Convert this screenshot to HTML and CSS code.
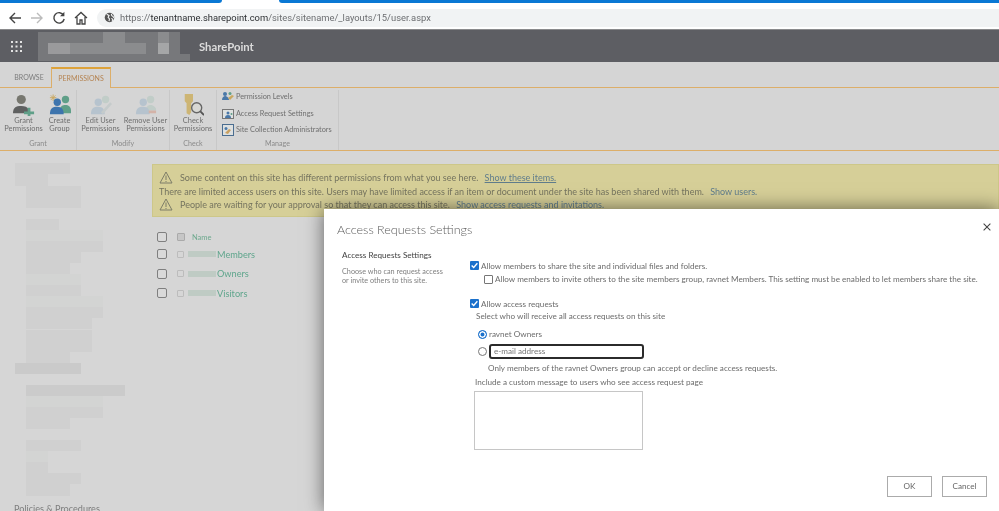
FILE: index.html
```html
<!DOCTYPE html>
<html lang="en">
<head>
<meta charset="utf-8">
<title>Access Requests Settings</title>
<link rel="stylesheet" href="styles.css">
</head>
<body>
<div class="page">
  <div class="tabstrip"><span class="tab-blue left"></span><span class="tab-gap"></span><span class="tab-blue right"></span></div>
  <header class="toolbar">
    <svg class="navicon" viewBox="0 0 16 16"><path d="M14 8H3M8 3 3 8l5 5" fill="none" stroke="#444" stroke-width="1.4"/></svg>
    <svg class="navicon" viewBox="0 0 16 16"><path d="M2 8h11M8 3l5 5-5 5" fill="none" stroke="#bbb" stroke-width="1.4"/></svg>
    <svg class="navicon" viewBox="0 0 16 16"><path d="M12.6 5.2A5.2 5.2 0 1 0 13.2 9" fill="none" stroke="#444" stroke-width="1.4"/><path d="M13.4 1.8v4.4H9z" fill="#444"/></svg>
    <svg class="navicon" viewBox="0 0 16 16"><path d="M2 8l6-5.5L14 8M4 7v7h3v-4h2v4h3V7" fill="none" stroke="#444" stroke-width="1.3"/></svg>
    <div class="urlbar">
      <svg class="globe" viewBox="0 0 12 12"><circle cx="6" cy="6" r="5.2" fill="#555"/><path d="M3 2.5l2.5 1.2L4.5 6 6 7.5 5.5 10M8 2l.5 2L10 5l1 1.5M8 7l1.5 1L9 10" fill="none" stroke="#f1f3f4" stroke-width="1.2"/></svg>
      <span class="url">https://<b>tenantname.sharepoint.com</b>/sites/sitename/_layouts/15/user.aspx</span>
    </div>
  </header>
  <div class="suitebar">
    <svg class="waffle" viewBox="0 0 11 11"><g fill="#e4e4e4"><rect width="2" height="2"/><rect x="4.5" width="2" height="2"/><rect x="9" width="2" height="2"/><rect y="4.5" width="2" height="2"/><rect x="4.5" y="4.5" width="2" height="2"/><rect x="9" y="4.5" width="2" height="2"/><rect y="9" width="2" height="2"/><rect x="4.5" y="9" width="2" height="2"/><rect x="9" y="9" width="2" height="2"/></g></svg>
    <svg class="tenant" viewBox="0 0 152 29"><g fill="#77787b"><rect width="142" height="11"/><rect y="11" width="142" height="11"/><rect y="22" width="152" height="7"/></g><g fill="#8b8c8e"><rect x="10" y="11" width="98" height="11"/><rect x="120" y="11" width="11" height="11"/><rect x="120" y="0" width="11" height="11"/><rect x="65" y="0" width="22" height="11"/></g><rect x="10" y="11" width="22" height="11" fill="#9a9a9c"/><rect x="120" y="11" width="11" height="11" fill="#a5a6a7"/></svg>
    <span class="suitename">SharePoint</span>
  </div>
  <nav class="ribbontabs">
    <span class="rtab">BROWSE</span>
    <span class="rtab active">PERMISSIONS</span>
  </nav>
  <section class="ribbon">
    <div class="group grant">
      <div class="cmds">
        <div class="cmd first">
          <svg class="bigicon" viewBox="0 0 24 24"><circle cx="9" cy="6" r="5" fill="#77776f"/><path d="M0 21c0-6 3-8 9-8 4 0 7 1 8 4v4z" fill="#5f6060"/><path d="M16 15h3v4h4v3h-4v2h-3v-2h-4v-3h4z" fill="#5f9f88"/></svg>
          <span>Grant<br>Permissions</span>
        </div>
        <div class="cmd narrow">
          <svg class="bigicon" viewBox="0 0 24 24"><g stroke="#c9a860" stroke-width="1"><path d="M1 4h7M4.500 .5v7M2 1.500l5 5M7 1.500l-5 5"/></g><circle cx="18" cy="6" r="4" fill="#5f9f88"/><path d="M12 18c0-5 3-6 6-6s6 2 6 6v3H12z" fill="#5f9f88"/><circle cx="9" cy="9" r="4" fill="#3d74ad"/><path d="M1 22c0-6 3-8 8-8s7 3 7 8z" fill="#3d74ad"/></svg>
          <span>Create<br>Group</span>
        </div>
      </div>
      <span class="grouplabel">Grant</span>
    </div>
    <div class="group modify">
      <div class="cmds">
        <div class="cmd wide">
          <svg class="bigicon" viewBox="0 0 24 24"><circle cx="17" cy="6" r="4" fill="#c1cdc8"/><circle cx="9" cy="9" r="4" fill="#b6c3ce"/><path d="M1 22c0-6 3-8 8-8s7 3 7 8z" fill="#b6c3ce"/><path d="M12 20 22 9l2 2-10 11z" fill="#c5cbcb"/></svg>
          <span>Edit User<br>Permissions</span>
        </div>
        <div class="cmd wide">
          <svg class="bigicon" viewBox="0 0 24 24"><circle cx="17" cy="6" r="4" fill="#c1cdc8"/><path d="M12 18c0-5 3-6 5-6s6 2 6 5v1z" fill="#c1cdc8"/><circle cx="9" cy="9" r="4" fill="#b6c3ce"/><path d="M1 22c0-6 3-8 8-8s7 3 7 8z" fill="#b6c3ce"/><rect x="15" y="18" width="8" height="3" fill="#d4b3a8"/></svg>
          <span>Remove User<br>Permissions</span>
        </div>
      </div>
      <span class="grouplabel">Modify</span>
    </div>
    <div class="group check">
      <div class="cmds">
        <div class="cmd wide">
          <svg class="bigicon" viewBox="0 0 24 24"><path d="M3 0h9v8l-2 2v10l-2 3-3-2V10L3 8z" fill="#cdb574"/><circle cx="16" cy="15" r="5.500" fill="#d8d8d4" stroke="#666" stroke-width="1.500"/><path d="M20 19l4 4" stroke="#555" stroke-width="2"/></svg>
          <span>Check<br>Permissions</span>
        </div>
      </div>
      <span class="grouplabel">Check</span>
    </div>
    <div class="group manage">
      <ul class="cmdlist">
        <li><svg class="smallicon" viewBox="0 0 12 12"><circle cx="3" cy="3" r="2" fill="#4a78a8"/><path d="M0 9c0-3 2-4 3-4s4 1 4 4z" fill="#4a78a8"/><circle cx="8" cy="2.500" r="1.500" fill="#5f9f88"/><path d="M6 7l4-3 2 1-4 4z" fill="#c9a860"/></svg>Permission Levels</li>
        <li><svg class="smallicon" viewBox="0 0 12 12"><rect x=".5" y="1.500" width="11" height="9" fill="#dfe2e0" stroke="#777"/><circle cx="6" cy="5" r="1.500" fill="#4a78a8"/><path d="M3 10c0-2 1-3 3-3s3 1 3 3z" fill="#4a78a8"/><circle cx="9.500" cy="6" r="1" fill="#5f9f88"/></svg>Access Request Settings</li>
        <li><svg class="smallicon" viewBox="0 0 12 12"><rect x=".5" y=".5" width="11" height="11" fill="#dde0e0" stroke="#4a6d90"/><circle cx="4" cy="4.500" r="1.500" fill="#4a78a8"/><path d="M3 9l4-4 2 1-3 4z" fill="#c9a060"/></svg>Site Collection Administrators</li>
      </ul>
      <span class="grouplabel">Manage</span>
    </div>
  </section>
  <main class="workspace">
    <aside class="sidenav">
      <svg class="mosaic" viewBox="0 0 125 345" aria-hidden="true">
        <g fill="#d0d0d0">
          <rect x="15" y="12" width="55" height="11"/><rect x="15" y="23" width="33" height="12"/><rect x="26" y="35" width="55" height="22"/>
          <rect x="26" y="68" width="33" height="11"/><rect x="26" y="90" width="77" height="11"/><rect x="26" y="101" width="55" height="11"/><rect x="26" y="112" width="44" height="11"/>
          <rect x="26" y="134" width="55" height="11"/><rect x="26" y="156" width="77" height="11"/><rect x="26" y="167" width="66" height="11"/><rect x="26" y="179" width="66" height="22"/><rect x="26" y="201" width="44" height="11"/>
          <rect x="15" y="212" width="66" height="11" fill="#cacaca"/>
          <rect x="26" y="234" width="99" height="11" fill="#cbcbcb"/><rect x="26" y="256" width="77" height="11"/><rect x="26" y="267" width="44" height="11"/>
          <rect x="26" y="289" width="55" height="11"/><rect x="26" y="311" width="22" height="11"/><rect x="26" y="322" width="55" height="11"/><rect x="26" y="333" width="44" height="12"/>
        </g>
        <g fill="#d3d4d3">
          <rect x="26" y="79" width="77" height="11"/><rect x="26" y="123" width="55" height="11"/><rect x="26" y="145" width="77" height="11"/><rect x="26" y="245" width="77" height="11"/><rect x="26" y="300" width="22" height="11"/>
        </g>
      </svg>
      <span class="navlink">Policies &amp; Procedures</span>
    </aside>
    <div class="content">
      <div class="notice">
        <p><svg class="warn" viewBox="0 0 14 13"><path d="M7 1 1 12h12z" fill="none" stroke="#7d7d68" stroke-width="1"/><path d="M7 4.500V9M7 10v1" stroke="#7d7d68"/></svg>Some content on this site has different permissions from what you see here. <a class="ul">Show these items.</a></p>
        <p>There are limited access users on this site. Users may have limited access if an item or document under the site has been shared with them. <a>Show users.</a></p>
        <p><svg class="warn" viewBox="0 0 14 13"><path d="M7 1 1 12h12z" fill="none" stroke="#7d7d68" stroke-width="1"/><path d="M7 4.500V9M7 10v1" stroke="#7d7d68"/></svg>People are waiting for your approval so that they can access this site. <a>Show access requests and invitations.</a></p>
      </div>
      <div class="grouplist">
        <div class="lrow head"><span class="cb"></span><span class="mini filled"></span><span class="hname">Name</span></div>
        <div class="lrow"><span class="cb"></span><span class="mini"></span><span class="blur"></span><span class="gname">Members</span></div>
        <div class="lrow"><span class="cb"></span><span class="mini"></span><span class="blur"></span><span class="gname">Owners</span></div>
        <div class="lrow"><span class="cb"></span><span class="mini"></span><span class="blur"></span><span class="gname">Visitors</span></div>
      </div>
    </div>
  </main>
  <div class="modal">
    <div class="modalhead">
      <h1>Access Requests Settings</h1>
      <svg class="close" viewBox="0 0 9 9"><path d="M.7.7l7.600 7.600M8.300.7.7 8.300" stroke="#444" stroke-width="1.200"/></svg>
    </div>
    <div class="modalbody">
      <div class="desc">
        <h2>Access Requests Settings</h2>
        <p>Choose who can request access<br>or invite others to this site.</p>
      </div>
      <form class="opts">
        <label class="opt"><span class="tick"><svg viewBox="0 0 11 11"><path d="M2 5.500 4.500 8 9 2.800" fill="none" stroke="#fff" stroke-width="1.600"/></svg></span>Allow members to share the site and individual files and folders.</label>
        <label class="opt sub"><span class="untick"></span>Allow members to invite others to the site members group, ravnet Members. This setting must be enabled to let members share the site.</label>
        <label class="opt second"><span class="tick"><svg viewBox="0 0 11 11"><path d="M2 5.500 4.500 8 9 2.800" fill="none" stroke="#fff" stroke-width="1.600"/></svg></span>Allow access requests</label>
        <p class="line select">Select who will receive all access requests on this site</p>
        <label class="opt radio1"><span class="radio on"></span>ravnet Owners</label>
        <div class="opt radio2"><span class="radio"></span><span class="email">e-mail address</span></div>
        <p class="line only">Only members of the ravnet Owners group can accept or decline access requests.</p>
        <p class="line include">Include a custom message to users who see access request page</p>
        <div class="message"></div>
      </form>
    </div>
    <div class="actions"><span class="btn">OK</span><span class="btn">Cancel</span></div>
  </div>
</div>
</body>
</html>
```

FILE: styles.css
```css
* { box-sizing: border-box; }
html, body { margin: 0; height: 100%; overflow: hidden; background: #fff; }
body { font-family: Lato, "Open Sans", "Liberation Sans", sans-serif; }
p, h1, h2, ul { margin: 0; padding: 0; }
ul { list-style: none; }
.page { position: relative; width: 999px; height: 511px; overflow: hidden; display: flex; flex-direction: column; filter: blur(0.35px); }

.tabstrip { display: flex; height: 3px; flex: none; }
.tab-blue { background: #0a78d4; height: 3px; }
.tab-blue.left { width: 222px; border-bottom-right-radius: 3px; }
.tab-gap { width: 57px; }
.tab-blue.right { flex: 1; border-bottom-left-radius: 3px; }

.toolbar { height: 26px; flex: none; display: flex; align-items: center; padding: 3px 0 0 7px; gap: 6px; background: #fff; }
.navicon { width: 16px; height: 16px; flex: none; }
.urlbar { flex: 1; margin-left: 2px; height: 18px; background: #f1f3f4; border-radius: 9px 0 0 9px; display: flex; align-items: center; padding-left: 7px; gap: 5px; }
.globe { width: 11px; height: 11px; flex: none; }
.url { font: 9.4px/18px Roboto, sans-serif; color: #6c6e71; white-space: nowrap; }
.url b { font-weight: 400; color: #2c2f32; }

.suitebar { height: 33px; flex: none; background: #5d5e63; border-top: 1px solid #8a8a8c; display: flex; align-items: center; padding-left: 11px; }
.waffle { width: 11px; height: 11px; flex: none; }
.tenant { width: 152px; height: 29px; flex: none; margin-left: 16px; }
.suitename { margin-left: 9px; font-size: 11.300px; font-weight: 700; color: #dcdcdc; }

.ribbontabs { height: 26px; flex: none; background: #d5d5d5; border-bottom: 1px solid #dcae69; display: flex; align-items: flex-end; padding-left: 7px; }
.rtab { font-size: 7px; line-height: 19px; color: #7c7c7c; width: 44px; text-align: center; }
.rtab.active { width: 60px; height: 21px; margin-bottom: -1px; background: #d5d5d5; border: 1px solid #dcae69; border-top: 2px solid #dda23a; border-bottom: 0; color: #b58452; text-align: center; }

.ribbon { height: 63px; flex: none; background: #d5d5d5; border-bottom: 1px solid #dcae69; display: flex; padding-top: 2px; }
.group { display: flex; flex-direction: column; align-items: center; border-right: 1px solid #c8c8c8; height: 60px; }
.group.grant { width: 77px; align-items: stretch; }
.group.modify { width: 93px; }
.group.check { width: 47px; }
.group.manage { width: 122px; align-items: stretch; }
.cmds { display: flex; flex: 1; justify-content: center; }
.grant .cmds { justify-content: flex-start; padding-left: 4px; }
.cmd { display: flex; flex-direction: column; align-items: center; font-size: 7.450px; line-height: 8px; color: #6f6f6f; width: 38px; text-align: center; white-space: nowrap; }
.cmd.first { width: 39px; }
.cmd.narrow { width: 33px; }
.cmd.wide { width: 45px; }
.bigicon { width: 22px; height: 22px; margin-top: 4px; margin-bottom: 1px; }
.grouplabel { font-size: 7.100px; line-height: 12px; color: #8a8a8a; text-align: center; }
.cmdlist { flex: 1; display: flex; flex-direction: column; padding: 1px 0 0 5px; gap: 4.500px; font-size: 7.350px; line-height: 12px; color: #6f6f6f; white-space: nowrap; }
.cmdlist li { display: flex; align-items: center; gap: 2px; }
.smallicon { width: 12px; height: 12px; flex: none; }

.workspace { flex: 1; min-height: 0; background: #d6d6d6; display: flex; }
.sidenav { width: 152px; flex: none; display: flex; flex-direction: column; }
.mosaic { width: 125px; height: 345px; flex: none; }
.navlink { margin: 7px 0 0 14px; font-size: 9.100px; line-height: 12px; color: #7d7d7d; white-space: nowrap; }
.content { flex: 1; min-width: 0; padding-top: 13px; }
.notice { height: 53px; background: #d6cf98; border: 1px solid #cdc789; padding: 6px 0 0 6px; font-size: 9px; line-height: 13.500px; color: #75745f; white-space: nowrap; }
.notice p { display: flex; align-items: center; white-space: pre; }
.notice a { color: #607d8c; margin-left: 4px; }
.notice a.ul { text-decoration: underline; }
.warn { width: 14px; height: 13px; flex: none; margin-right: 7px; }
.grouplist { padding: 12.500px 0 0 5px; }
.lrow { display: flex; align-items: center; height: 19.500px; }
.lrow.head { height: 15px; }
.cb { width: 10px; height: 10px; flex: none; border: 1px solid #7f7f7f; border-radius: 2px; margin-right: 10px; background: #d9d9d9; }
.mini { width: 7px; height: 7px; flex: none; border: 1px solid #bcbcbc; border-radius: 1px; margin-right: 4px; }
.mini.filled { width: 8px; height: 8px; background: #c6c6c6; border-color: #aaa; margin-right: 7px; }
.hname { font-size: 7.500px; color: #6ea98e; }
.blur { width: 28px; height: 6px; flex: none; background: #bfcbc4; }
.gname { margin-left: 1px; font-size: 9.200px; color: #60a68d; }

.modal { position: absolute; left: 324px; right: 0; top: 209px; bottom: 0; background: #fff; box-shadow: 0 0 18px rgba(0,0,0,.55); display: flex; flex-direction: column; }
.modalhead { display: flex; justify-content: space-between; align-items: center; padding: 10px 8px 0 13px; height: 30px; }
h1 { font-size: 12.500px; font-weight: 300; color: #5a5a5a; }
.close { width: 8px; height: 8px; margin-top: -5px; }
.modalbody { display: flex; padding: 9px 0 0 18px; }
.desc { width: 128px; flex: none; }
h2 { font-size: 8.150px; font-weight: 400; line-height: 15px; color: #3f3f3f; }
.desc p { margin-top: 3.500px; font-size: 7.250px; line-height: 9.500px; color: #808080; }
.opts { flex: 1; min-width: 0; font-size: 8.150px; color: #6c6c6c; }
.opt { display: flex; align-items: center; white-space: nowrap; }
.tick { width: 9px; height: 9px; flex: none; background: #1b71cc; border-radius: 1px; margin-right: 2px; display: flex; }
.tick svg { width: 9px; height: 9px; }
.untick { width: 9px; height: 9px; flex: none; border: 1px solid #767676; border-radius: 1px; margin-right: 2px; }
.opt:first-child { height: 11px; margin-top: 12px; }
.opt.sub { height: 12px; margin-top: 2px; padding-left: 14px; }
.opt.second { height: 11px; margin-top: 13px; }
.line { line-height: 11px; white-space: nowrap; }
.select { margin: 1.500px 0 0 6px; }
.radio1 { height: 11px; padding-left: 8px; margin-top: 7px; }
.radio { width: 9px; height: 9px; flex: none; border: 1px solid #777; border-radius: 50%; margin-right: 2px; background: #fff; }
.radio.on { border: 1px solid #1b71cc; box-shadow: inset 0 0 0 1.500px #fff; background: #1b71cc; }
.radio2 { height: 15px; padding-left: 8px; margin-top: 4px; }
.email { width: 155px; height: 15px; border: 2px solid #2b2b2b; border-radius: 3px; line-height: 11px; padding-left: 3px; color: #777; }
.only { margin: 4px 0 0 18px; }
.include { margin: 3px 0 0 5px; }
.message { width: 169px; height: 59px; margin: 3.500px 0 0 4px; border: 1px solid #c6c6c6; }
.actions { position: absolute; right: 12px; bottom: 14px; display: flex; gap: 10px; }
.btn { width: 45px; height: 21px; border: 1px solid #ababab; font-size: 8.150px; line-height: 19px; text-align: center; color: #666; }
```
